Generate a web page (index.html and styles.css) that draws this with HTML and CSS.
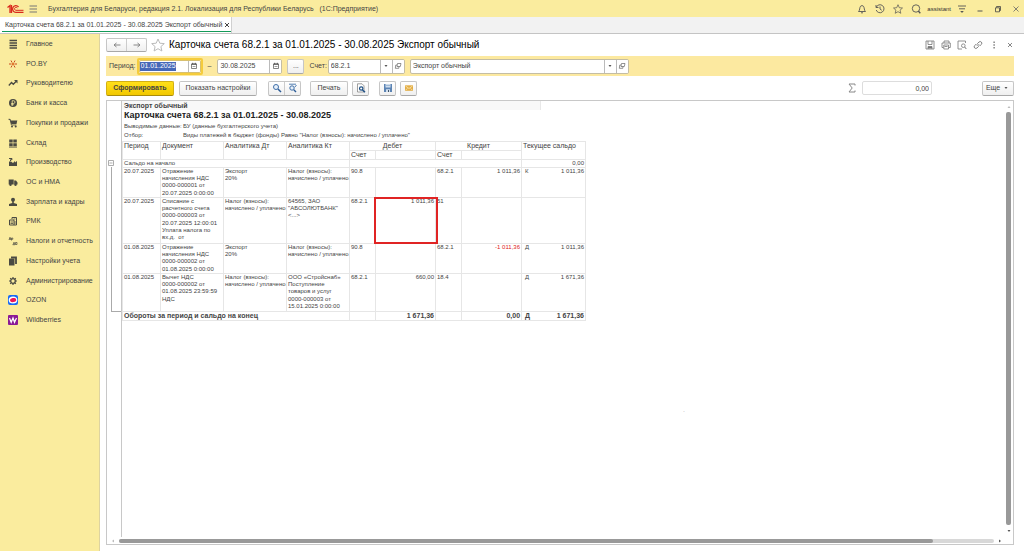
FILE: index.html
```html
<!DOCTYPE html>
<html lang="ru">
<head>
<meta charset="utf-8">
<title>Карточка счета 68.2.1</title>
<link rel="stylesheet" href="styles.css">
</head>
<body>
<svg class="defs" aria-hidden="true">
  <symbol id="calendar" viewBox="0 0 8 8"><path d="M1.500 2h5v4.500h-5z" fill="none" stroke="#666" stroke-width=".8"/><path d="M1.500 2.200h5M2.700.8v1.500M5.300.8v1.500" stroke="#555"/><path d="M2.500 4.500h3" stroke="#888" stroke-width=".8"/></symbol>
  <symbol id="open" viewBox="0 0 8 8"><path d="M3.500 1.500H7L6.300 4.500H3zM3 3H1.800L1.300 6.300h3.500L5 4.500" fill="none" stroke="#666" stroke-width=".7"/></symbol>
  <symbol id="down" viewBox="0 0 8 8"><path d="M2.500 3h3L4 5z" fill="#555"/></symbol>
  <symbol id="star" viewBox="0 0 14 14"><path d="M7 1l1.800 4.200 4.500.4-3.400 3 1 4.400L7 10.700 3.100 13l1-4.400-3.400-3 4.500-.4z" fill="none" stroke="currentColor" stroke-linejoin="round"/></symbol>
</svg>

<header class="titlebar">
  <svg class="logo" viewBox="0 0 17 10"><g fill="none" stroke="#d9291c" stroke-width="1.300"><path d="M.5 3.500L3 1.500V9M4.500 1v8"/><path d="M11.500 3A3.300 3.300 0 1 0 9 8.300h7.500"/><path d="M10.300 4A1.500 1.500 0 1 0 9 6.300h7.500" stroke-width="1"/></g></svg>
  <button class="plain" aria-label="Меню"><svg class="i10" viewBox="0 0 10 10"><path d="M1.500 2h7.500M1.500 5h7.500M1.500 8h7.500" stroke="#777"/></svg></button>
  <span class="app-name">Бухгалтерия для Беларуси, редакция 2.1. Локализация для Республики Беларусь &nbsp; (1С:Предприятие)</span>
  <div class="system">
    <button class="plain" aria-label="Уведомления"><svg class="i10" viewBox="0 0 10 10"><path d="M1.500 7.500c1.500-1 1-4 2-5.200Q5 .7 6.500 2.300c1 1.200.5 4.200 2 5.200zM4 8.800h2" fill="none" stroke="#555" stroke-width=".9"/></svg></button>
    <button class="plain" aria-label="История"><svg class="i10" viewBox="0 0 10 10"><path d="M1.300 3.200A4 4 0 1 1 1.200 6M1 1v2.500h2.500M5 2.500V5l1.800 1.300" fill="none" stroke="#555" stroke-width=".9"/></svg></button>
    <button class="plain" aria-label="Избранное"><svg class="i10 dark"><use href="#star"/></svg></button>
    <button class="plain" aria-label="Поиск"><svg class="i10" viewBox="0 0 10 10"><circle cx="5" cy="4.500" r="3.700" fill="none" stroke="#555" stroke-width=".9"/><path d="M7.300 7L9.300 9.300" stroke="#555" stroke-width="1.300"/></svg></button>
    <a class="user" href="#">assistant</a>
    <button class="plain" aria-label="Настройка"><svg class="i10" viewBox="0 0 10 10"><path d="M1 2h8M2 4.800h6" stroke="#555" stroke-width=".9"/><path d="M3.200 7h3.600L5 9z" fill="#555"/></svg></button>
    <button class="plain win" aria-label="Свернуть"><svg class="i8" viewBox="0 0 8 8"><path d="M1.500 6h5" stroke="#555"/></svg></button>
    <button class="plain win" aria-label="Восстановить"><svg class="i8" viewBox="0 0 8 8"><path d="M2.500 2.500V1.500h4v4H5.500M1.500 2.800h4v4h-4z" fill="none" stroke="#444" stroke-width=".8"/></svg></button>
    <button class="plain win" aria-label="Закрыть"><svg class="i8" viewBox="0 0 8 8"><path d="M1.500 1.500l5 5M6.500 1.500l-5 5" stroke="#666" stroke-width=".8"/></svg></button>
  </div>
</header>

<div class="tabs">
  <div class="tab"><span>Карточка счета 68.2.1 за 01.01.2025 - 30.08.2025 Экспорт обычный</span>
    <button class="plain" aria-label="Закрыть вкладку"><svg class="i6" viewBox="0 0 6 6"><path d="M1 1l4 4M5 1L1 5" stroke="#444"/></svg></button></div>
</div>

<div class="workspace">
  <nav class="sidebar">
    <a href="#"><svg class="i10" viewBox="0 0 10 10"><path d="M1.500 1.500h7.500M1.500 4h7.500M1.500 6.500h7.500M1.500 9h7.500" stroke="#4a4a42" stroke-width="1.300"/></svg>Главное</a>
    <a href="#"><svg class="i10" viewBox="0 0 10 10"><path d="M3 1.500L4 3.500M7 1.500L6 3.500M1 5h2.500M6.500 5H9M3 8.500L4 6.500M7 8.500L6 6.500" stroke="#c8471e"/><circle cx="5" cy="5" r="1.200" fill="#e2752a"/></svg>РО.BY</a>
    <a href="#"><svg class="i10" viewBox="0 0 10 10"><path d="M.8 7.500L3.500 4.500l1.800 1.800L8.500 3" fill="none" stroke="#4a4a42" stroke-width="1.300"/><path d="M6 2h3.500v3.500z" fill="#4a4a42"/></svg>Руководителю</a>
    <a href="#"><svg class="i10" viewBox="0 0 10 10"><circle cx="5" cy="5" r="4" fill="#4a4a42"/><path d="M4.200 8V2.700h1.500q1.300.2 1.300 1.400T5.700 5.500H3.200M3.200 6.700h2.500" fill="none" stroke="#faec9e" stroke-width=".8"/></svg>Банк и касса</a>
    <a href="#"><svg class="i10" viewBox="0 0 10 10"><path d="M.5 1h1.700l.5 1.500h6.600L8.500 6H3.300L2 2z" fill="#4a4a42"/><path d="M.5 1.300H2L3.400 7h5" fill="none" stroke="#4a4a42" stroke-width=".8"/><circle cx="4" cy="8.500" r="1" fill="#4a4a42"/><circle cx="7.700" cy="8.500" r="1" fill="#4a4a42"/></svg>Покупки и продажи</a>
    <a href="#"><svg class="i10" viewBox="0 0 10 10"><path d="M1.200 1.500h3.500v3H1.200zM5.300 1.500h3.500v3H5.300zM1.200 5.200h3.500v3H1.200zM5.300 5.200h3.500v3H5.300zM1 8.700h8v.8H1z" fill="#4a4a42"/></svg>Склад</a>
    <a href="#"><svg class="i10" viewBox="0 0 10 10"><path d="M1 9V4.500h2l2 1.500 2-2v1.500L9 4v5z" fill="#4a4a42"/><path d="M1 1.500h3v1.200H2.500V4" fill="none" stroke="#4a4a42"/></svg>Производство</a>
    <a href="#"><svg class="i10" viewBox="0 0 10 10"><path d="M.7 2.500h5v5h-5zM6.200 3.500H8L9.500 5.500v2H6.200z" fill="#4a4a42"/><circle cx="2.500" cy="7.800" r="1.200" fill="#4a4a42"/><circle cx="7.500" cy="7.800" r="1.200" fill="#4a4a42"/></svg>ОС и НМА</a>
    <a href="#"><svg class="i10" viewBox="0 0 10 10"><circle cx="5" cy="2.800" r="2" fill="#4a4a42"/><path d="M4.200 4h1.600v2L9 7v2H1V7l3.200-1z" fill="#4a4a42"/></svg>Зарплата и кадры</a>
    <a href="#"><svg class="i10" viewBox="0 0 10 10"><path d="M1.500 4h4.500v5H1.500zM4 3V1.500h4.500V9H6" fill="none" stroke="#4a4a42"/><path d="M2.500 6h2.500M2.500 7.500h2.500M5.500 3h2M7 5v3" stroke="#4a4a42" stroke-width=".8"/></svg>РМК</a>
    <a href="#"><svg class="i10" viewBox="0 0 10 10"><path d="M1 4L2 1.200 3 4M1.300 3.200h1.500M3.500 4.500V2h1.300v1.300H3.500M5 8.700l1-2.500 1 2.500H4.700M7.500 6.500H9v2H7.500z" fill="none" stroke="#4a4a42" stroke-width=".7"/></svg>Налоги и отчетность</a>
    <a href="#"><svg class="i10" viewBox="0 0 10 10"><path d="M1 2.500h5.500V9.500H1z" fill="#4a4a42"/><path d="M3 1.500h5v6.500" fill="none" stroke="#4a4a42" stroke-width="1.800"/></svg>Настройки учета</a>
    <a href="#"><svg class="i10" viewBox="0 0 10 10"><circle cx="5" cy="5" r="2.300" fill="none" stroke="#4a4a42" stroke-width="1.300"/><path d="M5 1v1.500M5 7.500V9M1 5h1.500M7.500 5H9M2.200 2.200l1 1M6.800 6.800l1 1M7.800 2.200l-1 1M3.200 6.800l-1 1" stroke="#4a4a42" stroke-width="1.200"/></svg>Администрирование</a>
    <a href="#"><svg class="i10" viewBox="0 0 10 10"><rect width="10" height="10" rx="2" fill="#1769f5"/><ellipse cx="5" cy="5" rx="4.300" ry="3.600" fill="#fff"/><ellipse cx="5.100" cy="5.100" rx="3.100" ry="2" transform="rotate(-12 5 5)" fill="#ee1557"/></svg>OZON</a>
    <a href="#"><svg class="i10" viewBox="0 0 10 10"><rect width="10" height="10" rx="1" fill="#8a1a96"/><path d="M1.500 3l1.700 4.300L5 3l1.500 4.300L8.500 3" fill="none" stroke="#fff" stroke-width="1.200"/></svg>Wildberries</a>
  </nav>

  <main class="content">
    <div class="heading">
      <div class="group nav-buttons">
        <button aria-label="Назад"><svg class="i10" viewBox="0 0 10 10"><path d="M8.500 5H2M4.500 3L2 5l2.500 2" fill="none" stroke="#888"/></svg></button>
        <button aria-label="Вперед"><svg class="i10" viewBox="0 0 10 10"><path d="M1.500 5H8M5.500 3L8 5 5.500 7" fill="none" stroke="#888"/></svg></button>
      </div>
      <button class="plain favorite" aria-label="В избранное"><svg class="i14"><use href="#star"/></svg></button>
      <h1>Карточка счета 68.2.1 за 01.01.2025 - 30.08.2025 Экспорт обычный</h1>
      <div class="tools">
        <button class="plain" aria-label="Сохранить"><svg class="i10" viewBox="0 0 10 10"><path d="M1 1h8v8H1zM3 1v3.500h4V1M3 9V6.500h4V9" fill="none" stroke="#777" stroke-width=".8"/><path d="M3 7.500h4" stroke="#777" stroke-width="2"/></svg></button>
        <button class="plain" aria-label="Печать"><svg class="i10" viewBox="0 0 10 10"><path d="M3 3V1h5v2M2.500 7.500H1V3h8.300v4.500H7.800M2.800 5h4.700v4H2.800zM3.500 6.500h3" fill="none" stroke="#777" stroke-width=".8"/></svg></button>
        <button class="plain" aria-label="Просмотр"><svg class="i10" viewBox="0 0 10 10"><path d="M8.500 3V1H1v8h4" fill="none" stroke="#777" stroke-width=".8"/><circle cx="6.300" cy="5.700" r="1.800" fill="none" stroke="#777" stroke-width=".8"/><path d="M7.700 7L9.300 9" stroke="#777"/></svg></button>
        <button class="plain" aria-label="Ссылка"><svg class="i10" viewBox="0 0 10 10"><path d="M4.300 5.800Q3.500 4.500 4.500 3.500L6 2q1.200-1 2.300 0t.2 2.300L7 5.700M5.700 4.200q.8 1.300-.2 2.300L4 8Q2.800 9 1.700 8t-.2-2.300L3 4.300" fill="none" stroke="#777" stroke-width=".9"/></svg></button>
        <button class="plain" aria-label="Еще"><svg class="i10" viewBox="0 0 10 10"><path d="M4.500 1.500h1.200v1.500H4.500zM4.500 4.300h1.200v1.500H4.500zM4.500 7h1.200v1.500H4.500z" fill="#666"/></svg></button>
        <button class="plain" aria-label="Закрыть"><svg class="i10" viewBox="0 0 10 10"><path d="M3 3l4 4M7 3L3 7" stroke="#888"/></svg></button>
      </div>
    </div>

    <form class="filter">
      <label for="from">Период:</label>
      <div class="focus-ring"><div class="field date"><span class="fill"><input class="selected" id="from" value="01.01.2025"></span><button type="button" aria-label="Календарь"><svg class="i8"><use href="#calendar"/></svg></button></div></div>
      <span class="dash">–</span>
      <div class="field date"><input aria-label="Конец периода" value="30.08.2025"><button type="button" aria-label="Календарь"><svg class="i8"><use href="#calendar"/></svg></button></div>
      <button type="button" class="btn dots">...</button>
      <label for="account">Счет:</label>
      <div class="field account"><input id="account" value="68.2.1"><button type="button" aria-label="Выбрать"><svg class="i8"><use href="#down"/></svg></button><button type="button" aria-label="Открыть"><svg class="i8"><use href="#open"/></svg></button></div>
      <div class="field org"><input aria-label="Организация" value="Экспорт обычный"><button type="button" aria-label="Выбрать"><svg class="i8"><use href="#down"/></svg></button><button type="button" aria-label="Открыть"><svg class="i8"><use href="#open"/></svg></button></div>
    </form>

    <div class="toolbar">
      <button class="btn primary">Сформировать</button>
      <button class="btn settings">Показать настройки</button>
      <div class="group find">
        <button aria-label="Найти"><svg class="i10" viewBox="0 0 10 10"><circle cx="4" cy="4" r="2.500" fill="#e8f1fb" stroke="#3f6fa8"/><path d="M6 6l3 3" stroke="#2d5c96" stroke-width="1.500"/></svg></button>
        <button aria-label="Найти далее"><svg class="i10" viewBox="0 0 10 10"><circle cx="4" cy="5" r="2.200" fill="#e8f1fb" stroke="#3f6fa8"/><path d="M5.800 6.800L8 9" stroke="#2d5c96" stroke-width="1.400"/><path d="M1 1.200h7M6.800 4.200L8.500 2" fill="none" stroke="#3f6fa8" stroke-width=".9"/></svg></button>
      </div>
      <button class="btn print">Печать</button>
      <button class="btn square preview" aria-label="Предварительный просмотр"><svg class="i10" viewBox="0 0 10 10"><path d="M1.500.8h4.500L8 2.800V9H1.500z" fill="#fff" stroke="#888" stroke-width=".8"/><circle cx="5.200" cy="5.500" r="1.700" fill="none" stroke="#1f5085" stroke-width="1.200"/><path d="M6.500 7L9 9.300" stroke="#1f5085" stroke-width="1.500"/></svg></button>
      <button class="btn square" aria-label="Сохранить"><svg class="i10" viewBox="0 0 10 10"><path d="M1 1h8v8H1z" fill="#5c84b4"/><path d="M2.500 1h5v3.500h-5zM3 6.200h4V9H3z" fill="#cfdeee"/><path d="M3 2.500h4" stroke="#8aa8c8" stroke-width=".7"/><path d="M5 7h1v2H5z" fill="#456"/></svg></button>
      <button class="btn square" aria-label="Отправить"><svg class="i10" viewBox="0 0 10 10"><path d="M1 2.300h8v5.500H1z" fill="#e2ad45"/><path d="M1.500 3L5 5.500 8.500 3M1.500 7.300l2-2M8.500 7.300l-2-2" fill="none" stroke="#fbe7b5" stroke-width=".8"/></svg></button>
      <svg class="i10 sigma" viewBox="0 0 10 10"><path d="M8 2.500V1H2l3.200 4L2 9h6V7.500" fill="none" stroke="#888"/></svg>
      <input class="sum" aria-label="Сумма" value="0,00">
      <button class="btn more">Еще <svg class="i8"><use href="#down"/></svg></button>
    </div>

    <section class="report">
      <div class="sheet">
        <div class="gutter"><button class="plain fold" aria-label="Свернуть группу"><svg class="i8" viewBox="0 0 8 8"><path d="M1.500 1.500h5v5h-5zM2.500 4h3" fill="#fff" stroke="#999" stroke-width=".8"/></svg></button><div class="bracket"></div></div>
        <div class="page">
          <div class="org-name">Экспорт обычный</div>
          <h2>Карточка счета 68.2.1 за 01.01.2025 - 30.08.2025</h2>
          <dl>
            <dt>Выводимые данные:</dt><dd>БУ (данные бухгалтерского учета)</dd>
            <dt>Отбор:</dt><dd>Виды платежей в бюджет (фонды) Равно "Налог (взносы): начислено / уплачено"</dd>
          </dl>
          <table>
            <colgroup><col class="c-date"><col class="c-text"><col class="c-text"><col class="c-text"><col class="c-acc"><col class="c-sum"><col class="c-acc"><col class="c-sum"><col class="c-side"><col class="c-rest"></colgroup>
            <thead>
              <tr><th rowspan="2">Период</th><th rowspan="2">Документ</th><th rowspan="2">Аналитика Дт</th><th rowspan="2">Аналитика Кт</th><th colspan="2" class="mid">Дебет</th><th colspan="2" class="mid">Кредит</th><th colspan="2" rowspan="2">Текущее сальдо</th></tr>
              <tr><th>Счет</th><th></th><th>Счет</th><th></th></tr>
            </thead>
            <tbody>
              <tr class="opening"><td colspan="4">Сальдо на начало</td><td colspan="4"></td><td class="side"></td><td class="num">0,00</td></tr>
              <tr class="four"><td>20.07.2025</td><td>Отражение<br>начисления НДС<br>0000-000001 от<br>20.07.2025 0:00:00</td><td>Экспорт<br>20%</td><td>Налог (взносы):<br>начислено / уплачено</td><td>90.8</td><td></td><td>68.2.1</td><td class="num">1 011,36</td><td class="side">К</td><td class="num">1 011,36</td></tr>
              <tr class="six"><td>20.07.2025</td><td>Списание с<br>расчетного счета<br>0000-000003 от<br>20.07.2025 12:00:01<br>Уплата налога по<br>вх.д. &nbsp;от</td><td>Налог (взносы):<br>начислено / уплачено</td><td>64565, ЗАО<br>"АБСОЛЮТБАНК"<br>&lt;...&gt;</td><td>68.2.1</td><td class="num marked">1 011,36</td><td>51</td><td></td><td class="side"></td><td class="num"></td></tr>
              <tr class="four"><td>01.08.2025</td><td>Отражение<br>начисления НДС<br>0000-000002 от<br>01.08.2025 0:00:00</td><td>Экспорт<br>20%</td><td>Налог (взносы):<br>начислено / уплачено</td><td>90.8</td><td></td><td>68.2.1</td><td class="num negative">-1 011,36</td><td class="side">Д</td><td class="num">1 011,36</td></tr>
              <tr class="five"><td>01.08.2025</td><td>Вычет НДС<br>0000-000002 от<br>01.08.2025 23:59:59<br>НДС</td><td>Налог (взносы):<br>начислено / уплачено</td><td>ООО «Стройснаб»<br>Поступление<br>товаров и услуг<br>0000-000003 от<br>15.01.2025 0:00:00</td><td>68.2.1</td><td class="num">660,00</td><td>18.4</td><td></td><td class="side">Д</td><td class="num">1 671,36</td></tr>
            </tbody>
            <tfoot>
              <tr><td colspan="4">Обороты за период и сальдо на конец</td><td></td><td class="num">1 671,36</td><td></td><td class="num">0,00</td><td class="side">Д</td><td class="num">1 671,36</td></tr>
            </tfoot>
          </table>
          <span class="speck">.</span>
        </div>
      </div>
      <div class="vscroll"><svg class="i6" viewBox="0 0 6 6"><path d="M1.500 4h3L3 2z" fill="#bbb"/></svg><div class="vthumb"></div><svg class="i6" viewBox="0 0 6 6"><path d="M1.500 2h3L3 4z" fill="#555"/></svg></div>
      <div class="hscroll"><svg class="i6" viewBox="0 0 6 6"><path d="M4 1.500v3L2 3z" fill="#bbb"/></svg><div class="htrack"><div class="hthumb"></div></div><svg class="i6" viewBox="0 0 6 6"><path d="M2 1.500v3L4 3z" fill="#555"/></svg></div>
    </section>
  </main>
</div>
</body>
</html>
```

FILE: styles.css
```css
* { box-sizing: border-box; }
body {
  margin: 0;
  height: 100vh;
  display: flex;
  flex-direction: column;
  overflow: hidden;
  background: #fff;
  color: #444;
  font: 7px/10px "Liberation Sans", Arial, sans-serif;
}
button, input { font: inherit; color: inherit; margin: 0; padding: 0; border: 0; border-radius: 0; outline: 0; min-width: 0; }
a { color: inherit; text-decoration: none; }
svg { display: block; flex: none; }
.defs { display: none; }
.i6 { width: 6px; height: 6px; }
.i8 { width: 8px; height: 8px; }
.i10 { width: 10px; height: 10px; }
.i14 { width: 14px; height: 14px; }
.plain { background: none; display: flex; align-items: center; justify-content: center; }

.titlebar { flex: none; height: 17px; display: flex; align-items: center; padding: 0 3px 0 7px; background: #faec9e; }
.logo { width: 17px; height: 10px; margin-right: 4px; }
.app-name { margin-left: 10px; white-space: nowrap; }
.system { margin-left: auto; display: flex; align-items: center; gap: 8px; }
.dark { color: #555; }
.user { margin: 0 -2px; font-size: 6px; color: #333; }
.win { width: 10px; }

.tabs { flex: none; height: 17px; display: flex; background: #f2f2f2; border-bottom: 1px solid #c4c4c4; }
.tab { display: flex; align-items: center; gap: 2px; padding: 0 1px 0 5px; background: linear-gradient(#139a58, #139a58) 2px 14px / 100% 1px no-repeat #fff; border-right: 1px solid #d0d0d0; white-space: nowrap; }

.workspace { flex: 1; min-height: 0; display: flex; }
.sidebar { flex: none; width: 100px; background: #faec9e; border-right: 1px solid #ddd3a0; display: grid; grid-template-rows: repeat(15, 1fr); height: 100%; padding-bottom: 221px; }
.sidebar a { display: flex; align-items: center; gap: 8px; padding-left: 8px; white-space: nowrap; }
.content { flex: 1; min-width: 0; display: flex; flex-direction: column; padding: 0 10px 6px 6px; }

.btn, .group { height: 15px; border: 1px solid #c6c6c6; border-bottom-color: #a8a8a8; border-radius: 2px; background: linear-gradient(#fff, #efefef); }
.btn { display: flex; align-items: center; justify-content: center; white-space: nowrap; }
.group { display: flex; }
.group button { flex: 1; display: flex; align-items: center; justify-content: center; background: none; }
.group button + button { border-left: 1px solid #ccc; }

.heading { flex: none; height: 22px; display: flex; align-items: center; }
.nav-buttons { width: 41px; height: 14px; }
.favorite { margin: 0 4px; color: #bbb; }
h1 { margin: 0; font-size: 10px; font-weight: 400; color: #000; white-space: nowrap; }
.tools { margin: 0 -1px 0 auto; display: flex; gap: 6px; }

.filter { flex: none; height: 20px; display: flex; align-items: center; padding-left: 3px; background: #fce9a0; }
.field { display: flex; height: 15px; border: 1px solid #c4bda4; border-radius: 2px; background: #fff; overflow: hidden; }
.field input { flex: 1; padding-left: 2px; background: none; }
.field button { flex: none; width: 12px; display: flex; align-items: center; justify-content: center; background: #fff; border-left: 1px solid #bbb; }
.date { width: 65px; }
.fill { flex: 1; display: flex; align-items: center; }
.focus-ring { margin-left: 1px; border: 2px solid #f5cc3c; border-radius: 2px; }
.focus-ring .field { width: 62px; height: 13px; border-color: #d8c070; }
.field .selected { flex: none; width: 36px; height: 9px; padding-left: 1px; background: #4668b8; color: #fff; }
.dash { margin: 0 6px 0 5px; }
.dots { width: 17px; margin: 0 5px; }
.account { width: 77px; margin: 0 5px 0 1px; }
.org { width: 219px; }

.toolbar { flex: none; height: 24px; display: flex; align-items: center; }
.primary { width: 68px; background: linear-gradient(#ffe01a, #f2c800); border-color: #d3b013; border-bottom-color: #a98c0c; font-weight: 700; }
.settings { width: 78px; margin: 0 11px 0 5px; }
.find { width: 33px; }
.print { width: 38px; margin: 0 4px 0 9px; }
.square { width: 17px; margin-right: 4px; }
.preview { margin-right: 10px; }
.sigma { margin-left: auto; margin-right: 5px; }
.sum { width: 70px; height: 14px; border: 1px solid #ddd; border-radius: 2px; text-align: right; padding-right: 2px; }
.more { width: 32px; margin-left: 50px; gap: 2px; }

.report { flex: 1; min-height: 0; display: grid; grid-template: 1fr 7px / 1fr 8px; border: 1px solid #c8c8c8; }
.sheet { display: flex; min-width: 0; min-height: 0; overflow: hidden; }
.gutter { flex: none; width: 15px; padding-top: 58px; border-right: 1px solid #c8c8c8; }
.bracket { height: 145px; margin-left: 4px; border: solid #aaa; border-width: 0 0 1px 1px; }
.page { flex: 1; min-width: 0; }
.org-name { width: 419px; height: 9px; line-height: 9px; padding-left: 2px; background: #f8f8f8; border-right: 1px solid #e8e8e8; font-weight: 700; }
h2 { margin: 0; padding-left: 2px; font-size: 9px; line-height: 11px; color: #222; white-space: nowrap; }
dl { margin: 0; display: grid; grid-template-columns: 59px 1fr; padding: 1px 0 1px 2px; font-size: 6px; line-height: 9px; }
dt, dd { margin: 0; white-space: nowrap; }
table { width: 464px; table-layout: fixed; border-collapse: collapse; font-size: 6px; line-height: 1.2; }
.c-date { width: 38px; }
.c-text { width: 63px; }
.c-acc { width: 26px; }
.c-sum { width: 60px; }
.c-side { width: 14px; }
th, td { padding: 0 1px; border: 1px solid #e6e6e6; text-align: left; vertical-align: top; white-space: nowrap; }
th { height: 9px; font-size: 7px; line-height: 8px; font-weight: 400; }
thead { border-bottom: 1px solid #b5b5b5; }
.mid { text-align: center; }
.num { text-align: right; border-left: 0; }
.side { padding-left: 3px; border-right: 0; }
.opening { height: 8px; line-height: 7px; }
.four { height: 30px; }
.five { height: 38px; }
.six { height: 46px; }
.negative { color: #e02020; }
.marked { position: relative; }
.marked::after { content: ""; position: absolute; inset: -1px -3px -1px -2px; border: 2px solid #e02424; }
tfoot td { height: 9px; font-size: 7px; line-height: 8px; font-weight: 700; }
.speck { display: block; margin: 84px 0 0 561px; color: #bbb; }

.vscroll { display: flex; flex-direction: column; align-items: center; padding: 3px 1px 3px 0; }
.vthumb { flex: 1; width: 5px; margin: 2px 0 3px; border-radius: 2px; background: #999; }
.hscroll { grid-column: 1 / -1; display: flex; align-items: center; padding: 0 10px 0 3px; }
.htrack { flex: 1; height: 4px; margin: 0 3px; border-radius: 2px; background: #d8d8d8; }
.hthumb { width: 93%; height: 4px; border-radius: 2px; background: #999; }
```
